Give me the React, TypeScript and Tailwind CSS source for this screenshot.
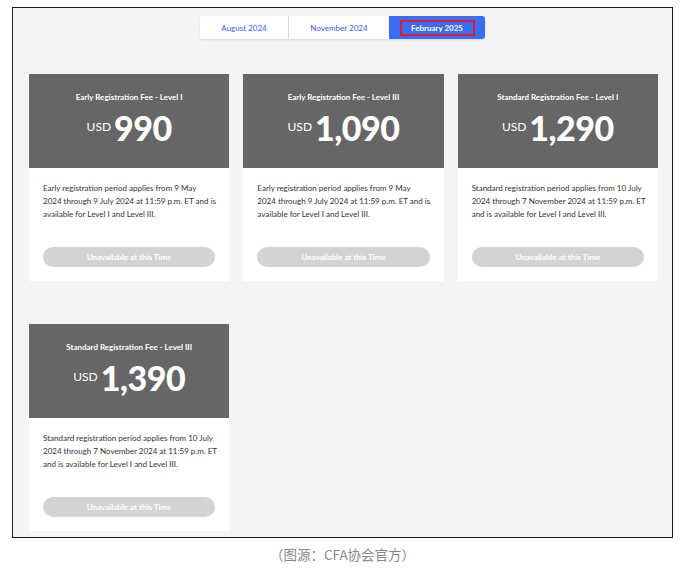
const fees = [
  {
    title: 'Early Registration Fee - Level I',
    price: '990',
    lines: ['Early registration period applies from 9 May', '2024 through 9 July 2024 at 11:59 p.m. ET and is', 'available for Level I and Level III.'],
  },
  {
    title: 'Early Registration Fee - Level III',
    price: '1,090',
    lines: ['Early registration period applies from 9 May', '2024 through 9 July 2024 at 11:59 p.m. ET and is', 'available for Level I and Level III.'],
  },
  {
    title: 'Standard Registration Fee - Level I',
    price: '1,290',
    lines: ['Standard registration period applies from 10 July', '2024 through 7 November 2024 at 11:59 p.m. ET', 'and is available for Level I and Level III.'],
  },
  {
    title: 'Standard Registration Fee - Level III',
    price: '1,390',
    lines: ['Standard registration period applies from 10 July', '2024 through 7 November 2024 at 11:59 p.m. ET', 'and is available for Level I and Level III.'],
  },
]

function FeeCard({ title, price, lines }: { title: string; price: string; lines: string[] }) {
  return (
    <div className="flex flex-col">
      <div className="flex h-[94px] flex-col items-center bg-[#666666] pt-[18px] text-white">
        <div className="text-[8px] font-bold leading-[10px]">{title}</div>
        <div className="mt-[7px] flex items-center gap-[3px]">
          <span className="mt-[-2px] text-[12px] leading-none">USD</span>
          <span className="text-[34px] font-black leading-[38px] tracking-[-0.5px]">{price}</span>
        </div>
      </div>
      <div className="flex h-[113px] flex-col bg-white px-[14px] pb-[14px] pt-[14px]">
        <p className="whitespace-nowrap text-[8px] leading-[13px] text-[#333]">
          {lines.map(l => (
            <span key={l} className="block">{l}</span>
          ))}
        </p>
        <button className="mt-auto h-[20px] rounded-full bg-[#d3d3d3] text-[8px] font-bold text-white">
          Unavailable at this Time
        </button>
      </div>
    </div>
  )
}

export default function App() {
  return (
    <div className="h-[574px] w-[685px] bg-white pl-[12px] pt-[7px] font-['Lato',sans-serif]">
      <div className="flex h-[531px] w-[661px] flex-col border-[1.5px] border-[#1c1c1c] bg-[#f4f4f4]">
        <div className="mt-[8px] flex justify-center">
          <div className="flex h-[23px] rounded-[3px] bg-white shadow-[0_1px_2px_rgba(0,0,0,0.12)]">
            <div className="flex w-[89px] items-center justify-center border-r border-[#d9d9d9] text-[8px] text-[#3d5afe]">
              August 2024
            </div>
            <div className="flex w-[100px] items-center justify-center text-[8px] text-[#3d5afe]">
              November 2024
            </div>
            <div className="flex w-[96px] items-center justify-center rounded-r-[3px] bg-[#3b6cf6]">
              <span className="flex h-[16px] w-[75px] items-center justify-center border-2 border-[#e3182d] text-[8px] font-bold text-white">
                February 2025
              </span>
            </div>
          </div>
        </div>
        <div className="mt-[35px] grid grid-cols-3 gap-x-[14px] gap-y-[43px] pl-[16px] pr-[14px]">
          {fees.map(f => (
            <FeeCard key={f.title} {...f} />
          ))}
        </div>
      </div>
      <div className="mt-[6px] w-[661px] text-center font-['Noto_Sans_CJK_SC',serif] text-[13.5px] text-[#888]">
        （图源：CFA协会官方）
      </div>
    </div>
  )
}
